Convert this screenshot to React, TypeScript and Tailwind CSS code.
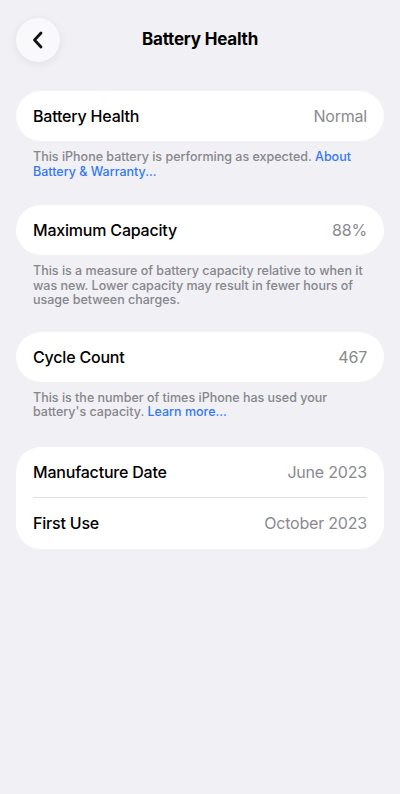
import React from "react";

const font = { fontFamily: "Inter, 'Noto Sans', sans-serif" };

function Row({ label, value }: { label: string; value: string }) {
  return (
    <div className="flex items-center justify-between h-[50px]">
      <span className="text-[16px] font-medium text-black tracking-[-0.2px]">{label}</span>
      <span className="text-[16px] text-[#8a8a8e] tracking-[-0.2px]">{value}</span>
    </div>
  );
}

function Footer({ children }: { children: React.ReactNode }) {
  return (
    <p className="px-[17px] pt-[9px] text-[12.5px] leading-[14.5px] text-[#86868b] font-medium">
      {children}
    </p>
  );
}

export default function App() {
  return (
    <div className="min-h-[794px] w-full bg-[#f0f0f5] px-4 pt-[18px]" style={font}>
      {/* Nav */}
      <div className="relative flex items-center justify-center h-[44px]">
        <button className="absolute left-0 top-0 h-[44px] w-[44px] rounded-full bg-[#f9f9fb] shadow-[0_2px_10px_rgba(0,0,0,0.07)] flex items-center justify-center">
          <svg width="14" height="18" viewBox="0 0 14 18" fill="none">
            <path d="M10 2 L3.5 9 L10 16" stroke="#111" strokeWidth="2.8" strokeLinecap="round" strokeLinejoin="round" />
          </svg>
        </button>
        <h1 className="text-[17px] font-bold text-black tracking-[-0.2px]">Battery Health</h1>
      </div>

      <div className="mt-[29px] flex flex-col">
        <div className="rounded-[25px] bg-white px-[17px]">
          <Row label="Battery Health" value="Normal" />
        </div>
        <Footer>
          This iPhone battery is performing as expected.{" "}
          <span className="text-[#3478f6]">About Battery &amp; Warranty...</span>
        </Footer>

        <div className="mt-[26px] rounded-[25px] bg-white px-[17px]">
          <Row label="Maximum Capacity" value="88%" />
        </div>
        <Footer>
          This is a measure of battery capacity relative to when it was new. Lower capacity may result in fewer hours of usage between charges.
        </Footer>

        <div className="mt-[24px] rounded-[25px] bg-white px-[17px]">
          <Row label="Cycle Count" value="467" />
        </div>
        <Footer>
          This is the number of times iPhone has used your battery's capacity.{" "}
          <span className="text-[#3478f6]">Learn more...</span>
        </Footer>

        <div className="mt-[27px] rounded-[25px] bg-white px-[17px]">
          <div className="h-[51px] flex items-center justify-between border-b border-[#e2e2e6]">
            <span className="text-[16px] font-medium text-black tracking-[-0.2px]">Manufacture Date</span>
            <span className="text-[16px] text-[#8a8a8e] tracking-[-0.2px]">June 2023</span>
          </div>
          <div className="h-[51px] flex items-center justify-between">
            <span className="text-[16px] font-medium text-black tracking-[-0.2px]">First Use</span>
            <span className="text-[16px] text-[#8a8a8e] tracking-[-0.2px]">October 2023</span>
          </div>
        </div>
      </div>
    </div>
  );
}
